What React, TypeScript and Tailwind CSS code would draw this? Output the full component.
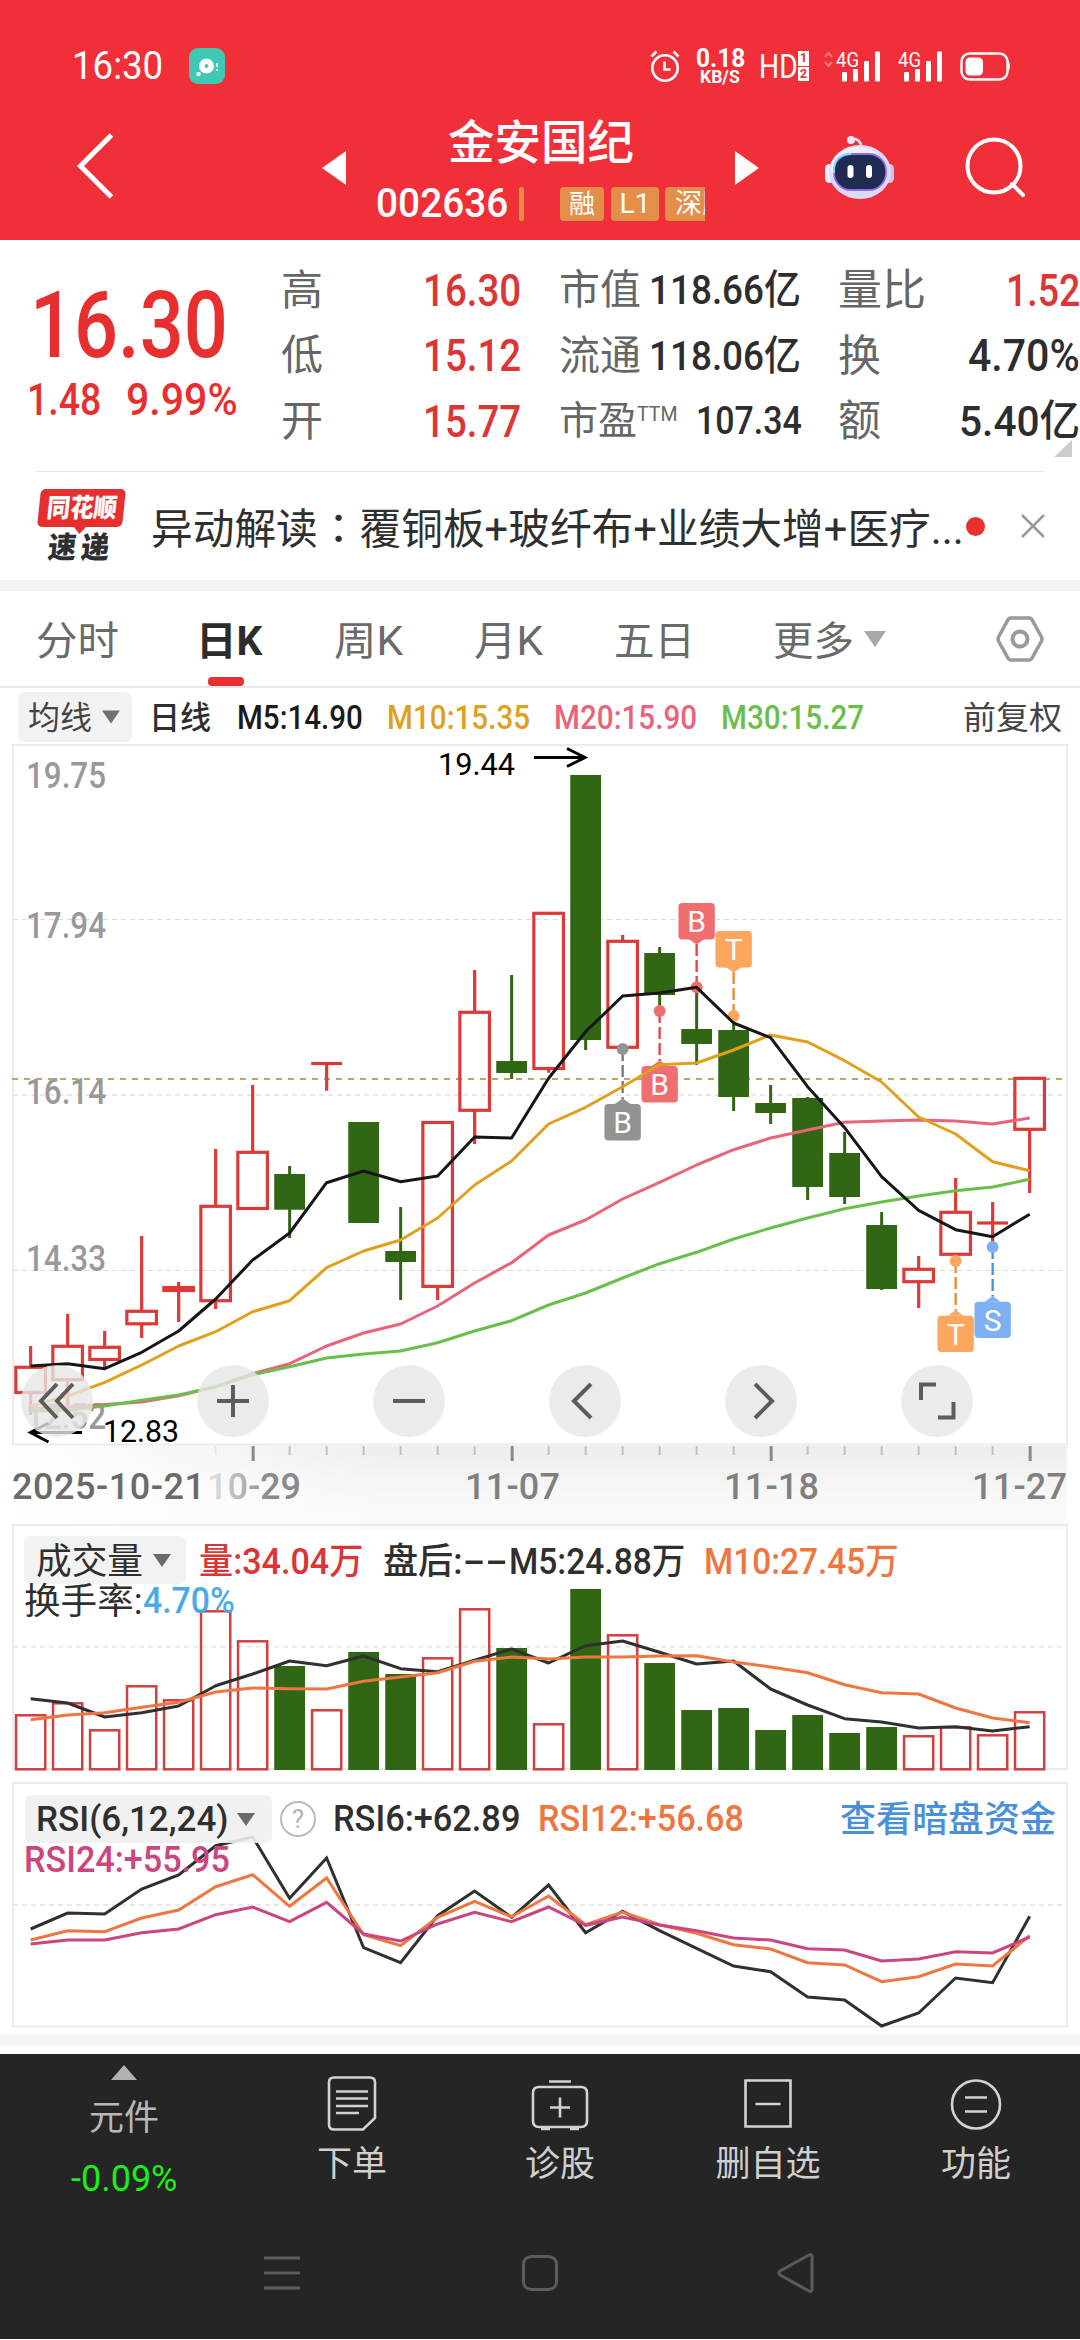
import { useLayoutEffect, useRef, useState } from "react";
import type { ReactNode } from "react";

/** Text condensed or stretched to the width of its box. */
function Fit({ className = "", children }: { className?: string; children: ReactNode }) {
  const box = useRef<HTMLSpanElement>(null);
  const ink = useRef<HTMLSpanElement>(null);
  const [scale, setScale] = useState(1);
  useLayoutEffect(() => {
    const measure = () => {
      if (box.current && ink.current && ink.current.offsetWidth) {
        setScale(box.current.clientWidth / ink.current.offsetWidth);
      }
    };
    measure();
    document.fonts?.ready.then(measure);
  }, [children]);
  return (
    <span ref={box} className={"inline-flex shrink-0 whitespace-nowrap leading-none " + className}>
      <span ref={ink} className="inline-block origin-left shrink-0 leading-none" style={{ transform: `scaleX(${scale})` }}>
        {children}
      </span>
    </span>
  );
}

const START = 30.65;
const STEP = 37;
const cx = (i: number) => START + i * STEP;
const path = (ys: number[]) => ys.map((y, i) => `${cx(i).toFixed(1)},${y}`).join(" ");

const RED = "#dc3a38";
const GREEN = "#306614";

// [up?, high, bodyTop, bodyBottom, low]
const candles: [boolean, number, number, number, number][] = [
  [true, 1347, 1368.3, 1393.5, 1416],
  [true, 1315, 1347.3, 1380.7, 1407],
  [true, 1332, 1348.3, 1360.5, 1368],
  [true, 1237, 1312.3, 1324.8, 1339],
  [true, 1283, 1288.5, 1291.5, 1323],
  [true, 1150, 1207.3, 1301.7, 1310],
  [true, 1086, 1153.3, 1209.5, 1209.5],
  [false, 1167, 1175, 1210.7, 1239],
  [true, 1064.5, 1064.5, 1064.5, 1091.7],
  [false, 1123, 1123, 1224, 1224],
  [false, 1208, 1252, 1263, 1301],
  [true, 1123.5, 1123.5, 1287.4, 1301],
  [true, 971, 1013.3, 1111.3, 1145],
  [false, 976, 1062, 1074, 1080],
  [true, 914.3, 914.3, 1069.5, 1073.7],
  [false, 776, 776, 1041, 1051],
  [true, 936, 942.3, 1048.3, 1048.3],
  [false, 948, 954, 996, 1011],
  [false, 989, 1030, 1045, 1066],
  [false, 1016, 1031, 1098, 1112],
  [false, 1086, 1104, 1114, 1125],
  [false, 1098, 1099, 1188, 1201],
  [false, 1133, 1154, 1198, 1205],
  [false, 1213, 1226, 1290, 1291],
  [true, 1257, 1270.3, 1282.7, 1309],
  [true, 1179, 1213.3, 1255.3, 1262],
  [true, 1203, 1224, 1224, 1247.7],
  [true, 1079.3, 1079.3, 1130.3, 1194],
];

const ma5 = [1367, 1364.7, 1369.7, 1353.3, 1332, 1300, 1261, 1234, 1183.7, 1172, 1182.7, 1177, 1138, 1139, 1079.3, 1032.7, 997, 994, 988.3, 1024, 1038.7, 1087.7, 1128.7, 1177.7, 1211.3, 1230.7, 1237.7, 1215.3];
const ma10 = [1407, 1397, 1383.3, 1366, 1347, 1332.7, 1312.7, 1301.7, 1268.7, 1252, 1241, 1219, 1186, 1162, 1125, 1108.3, 1087.7, 1065.7, 1064, 1051, 1036, 1043, 1061.7, 1083, 1118, 1135, 1162.7, 1171.7];
const ma20 = [1410, 1408, 1405.5, 1403, 1396.7, 1387.7, 1374.7, 1364.7, 1347, 1334, 1325, 1307, 1284, 1263.7, 1236, 1221, 1200, 1183.3, 1166, 1150.7, 1139, 1131, 1123.3, 1122, 1121, 1122, 1125, 1119];
const ma30 = [1412, 1411, 1407, 1401.3, 1396, 1387.7, 1375.7, 1367.7, 1359, 1355, 1352, 1343.7, 1332, 1321.7, 1306, 1294, 1279, 1264.7, 1253.3, 1240, 1229, 1219, 1209.7, 1203, 1197, 1191.7, 1188, 1180.3];

const volumes = [1716.3, 1704.3, 1731.3, 1687.3, 1701.3, 1612.3, 1642.3, 1667, 1711.3, 1653, 1675, 1659.3, 1610.3, 1649, 1725.3, 1590, 1636.3, 1664, 1711, 1709, 1731, 1716, 1734, 1728, 1737.3, 1728.3, 1736.3, 1713.3];
const vma5 = [1699.7, 1704, 1718, 1713.7, 1707, 1686.7, 1675, 1662, 1666.7, 1657, 1669.7, 1672.7, 1661.3, 1650, 1664, 1646.7, 1642, 1653.3, 1665, 1662, 1690, 1706, 1719.7, 1723, 1729, 1727.7, 1732, 1727.7];
const vma10 = [1720.7, 1716, 1713.7, 1708.3, 1703.3, 1693, 1689, 1689.7, 1690, 1682.3, 1678, 1673.7, 1662.3, 1658, 1660, 1658, 1658, 1657, 1656.7, 1663, 1668, 1673.7, 1685.7, 1693.7, 1695, 1709, 1719, 1723.7];

const rsi6 = [1930, 1914, 1915, 1890, 1876, 1846.7, 1838, 1899.3, 1859, 1948.7, 1963.7, 1916.7, 1892, 1918.3, 1886, 1933.7, 1912.3, 1931.7, 1949.3, 1967, 1972.7, 1998, 2001, 2027, 2014, 1979, 1983.7, 1917.3];
const rsi12 = [1941, 1931.7, 1932.7, 1919, 1911, 1887.7, 1875.7, 1907.3, 1879, 1935.7, 1946.7, 1918.3, 1902.3, 1917.7, 1897, 1925.7, 1913, 1925.7, 1934.3, 1945.7, 1950, 1963.7, 1966, 1982.7, 1977.7, 1965, 1967, 1936.7];
const rsi24 = [1945, 1941, 1941, 1933.7, 1930, 1915.7, 1908, 1922.7, 1903.3, 1935, 1942, 1925, 1913.3, 1922.7, 1908, 1926.3, 1918, 1926, 1931.7, 1939, 1941, 1949.7, 1951, 1962, 1960, 1952.7, 1954, 1938];

const markers: { i: number; letter: string; top: number; dot: number; fill: string; line: string }[] = [
  { i: 18, letter: "B", top: 904, dot: 988.3, fill: "#f06e70", line: "#e0484a" },
  { i: 19, letter: "T", top: 932, dot: 1017, fill: "#fda65e", line: "#f08a36" },
  { i: 16, letter: "B", top: 1105, dot: 1050, fill: "#939393", line: "#7a7a7a" },
  { i: 17, letter: "B", top: 1067, dot: 1012, fill: "#f06e70", line: "#e0484a" },
  { i: 25, letter: "T", top: 1316.7, dot: 1262, fill: "#fda65e", line: "#f08a36" },
  { i: 26, letter: "S", top: 1302.7, dot: 1248, fill: "#7db1f2", line: "#4a92e6" },
];

function Marker({ i, letter, top, dot, fill, line }: (typeof markers)[number]) {
  const x = cx(i);
  const above = top < dot;
  const from = above ? top + 41 : dot;
  const to = above ? dot : top - 5;
  return (
    <g>
      <line x1={x} x2={x} y1={from} y2={to} stroke={line} strokeWidth="2.4" strokeDasharray="12 4" />
      <circle cx={x} cy={dot} r="6" fill={fill} />
      <path d={above ? `M${x - 8} ${top + 36}h16l-8 5.5z` : `M${x - 8} ${top}h16l-8 -5.5z`} fill={fill} />
      <rect x={x - 18.2} y={top} width="36.4" height="36.4" rx="4" fill={fill} />
      <text x={x} y={top + 29} textAnchor="middle" fontSize="30" fill="#fff">{letter}</text>
    </g>
  );
}

function Candle({ i, up, high, top, bottom, low }: { i: number; up: boolean; high: number; top: number; bottom: number; low: number }) {
  const x = cx(i);
  if (up) {
    return (
      <g stroke={RED} strokeWidth="3.2" fill="none">
        {high < top && <line x1={x} x2={x} y1={high} y2={top} />}
        {low > bottom && <line x1={x} x2={x} y1={bottom} y2={low} />}
        {bottom - top > 1 ? (
          <rect x={x - 14.8} y={top} width="29.6" height={bottom - top} />
        ) : (
          <line x1={x - 15.5} x2={x + 15.5} y1={top} y2={top} />
        )}
      </g>
    );
  }
  return (
    <g fill={GREEN}>
      <rect x={x - 1.5} y={high} width="3" height={low - high} />
      <rect x={x - 15.4} y={top} width="30.8" height={bottom - top} />
    </g>
  );
}

function Down({ className = "" }: { className?: string }) {
  return (
    <svg viewBox="0 0 18 13" className={"shrink-0 " + className}>
      <path d="M0 0h18l-9 13z" fill="currentColor" />
    </svg>
  );
}

function Signal({ arrows }: { arrows?: boolean }) {
  return (
    <svg width="58" height="34" viewBox="-12 0 58 34" fill="#fff" className="shrink-0 overflow-visible">
      {arrows && <path d="M-11 8l3.500-4 3.500 4M-11 13l3.500 4 3.500-4" fill="none" stroke="#ff7d80" strokeWidth="2" />}
      <text x="0" y="17.500" fontSize="21" textLength="23" lengthAdjust="spacingAndGlyphs">4G</text>
      <rect x="6" y="23" width="5" height="9.500" rx="1" />
      <rect x="17" y="20" width="5" height="12.500" rx="1" />
      <rect x="28" y="12" width="5" height="20.500" rx="1" />
      <rect x="39" y="2.500" width="5" height="30" rx="1" />
    </svg>
  );
}

function Header() {
  return (
    <header className="flex h-60 shrink-0 flex-col bg-[#f12f38] text-white">
      <div className="mt-9 flex h-[60px] items-center">
        <Fit className="ml-[72px] w-[91px] text-[39px]">16:30</Fit>
        <svg width="36" height="36" viewBox="0 0 36 36" className="ml-[26px]">
          <rect width="36" height="36" rx="9" fill="#3fc8b4" />
          <circle cx="17.500" cy="18" r="7.500" fill="#fff" />
          <circle cx="17.500" cy="18" r="2" fill="#3fc8b4" />
          <circle cx="9.500" cy="26" r="2.200" fill="#fff" />
          <path d="M28 15v4M28 21v2" stroke="#fff" strokeWidth="1.500" />
        </svg>
        <svg width="30" height="32" viewBox="0 0 30 32" fill="none" stroke="#fff" strokeWidth="2.600" className="ml-[425px]">
          <circle cx="15" cy="18" r="12.700" />
          <path d="M14.500 11.500v8h6M1.500 6.500l5-5M28.500 6.500l-5-5" />
        </svg>
        <div className="ml-[15px] flex w-[50px] flex-col items-center">
          <Fit className="w-[49px] text-[25px] font-bold">0.18</Fit>
          <Fit className="-mt-[3px] w-10 text-[18px] font-bold">KB/S</Fit>
        </div>
        <Fit className="ml-[14px] w-[39px] text-[34px]">HD</Fit>
        <div className="flex w-[11px] flex-col gap-[1px] text-center text-[13px] leading-[14px] font-bold text-[#f12f38]">
          <span className="h-[15px] bg-white">1</span>
          <span className="h-[14px] bg-white">2</span>
        </div>
        <div className="ml-[15px] flex gap-1">
          <Signal arrows />
          <Signal />
        </div>
        <svg width="52" height="30" viewBox="0 0 52 30" className="ml-[16px]">
          <rect x="1.500" y="2.500" width="46" height="26" rx="8" fill="none" stroke="#fff" strokeWidth="2.400" />
          <rect x="5.500" y="6.500" width="17.500" height="18" rx="4.500" fill="#fff" />
          <path d="M48 9c2.500 3 2.500 9 0 12z" fill="#fff" />
        </svg>
      </div>
      <div className="flex h-[144px] items-center">
        <svg width="38" height="68" viewBox="0 0 38 68" fill="none" stroke="#fff" strokeWidth="5" className="-mt-1 ml-[76px]">
          <path d="M35.500 3L4.500 34l31 31" />
        </svg>
        <svg width="24" height="34" viewBox="0 0 24 34" className="ml-[208px]">
          <path d="M24 0v34L0 17z" fill="#fff" />
        </svg>
        <div className="ml-[30px] flex h-full w-[329px] flex-col">
          <div className="mt-[23px] flex h-[49px] justify-center">
            <Fit className="w-[186px] text-[47px] font-medium">金安国纪</Fit>
          </div>
          <div className="mt-[19px] flex h-[34px] items-center overflow-hidden">
            <Fit className="w-[132px] text-[40px] font-medium">002636</Fit>
            <span className="ml-[11px] h-[34px] w-[5px] shrink-0 rounded-sm bg-[#e38f4a]" />
            <span className="ml-9 h-[34px] w-11 shrink-0 rounded-sm bg-[#e38f4a] text-center text-[26px] leading-[34px]">融</span>
            <span className="ml-[7px] h-[34px] w-[48px] shrink-0 rounded-sm bg-[#e38f4a] text-center text-[28px] leading-[34px]">L1</span>
            <span className="ml-[6px] flex h-[34px] w-[50px] shrink-0 items-center rounded-sm bg-[#e38f4a] pl-[10px] text-[27px] leading-[34px] whitespace-nowrap">深股</span>
          </div>
        </div>
        <svg width="24" height="34" viewBox="0 0 24 34" className="ml-[30px]">
          <path d="M0 0v34l24-17z" fill="#fff" />
        </svg>
        <svg width="70" height="66" viewBox="0 0 70 66" className="ml-[66px]">
          <circle cx="26" cy="5" r="4" fill="#e9e6fa" />
          <path d="M26 4c7-1 10 3 10 8" fill="none" stroke="#e9e6fa" strokeWidth="2.500" />
          <rect x="0" y="29" width="9" height="19" rx="4.500" fill="#f0eefc" />
          <rect x="60" y="29" width="9" height="19" rx="4.500" fill="#c9c4f2" />
          <ellipse cx="35" cy="37" rx="31" ry="27" fill="#dedafa" />
          <ellipse cx="33" cy="34" rx="27" ry="22" fill="#f1effd" />
          <rect x="9" y="19" width="52" height="36" rx="17" fill="#1f2b50" stroke="#8f6cf0" strokeWidth="1.800" />
          <path d="M26 19c-11 0-17 6-17 16v3" fill="none" stroke="#7fe0f0" strokeWidth="1.800" />
          <rect x="22.500" y="30" width="6" height="13" rx="3" fill="#fff" />
          <rect x="41" y="30" width="6" height="13" rx="3" fill="#fff" />
        </svg>
        <svg width="62" height="62" viewBox="0 0 62 62" fill="none" stroke="#fff" strokeWidth="4" className="-mt-[2px] ml-[70px]">
          <circle cx="29" cy="30" r="26.500" />
          <path d="M47 48l11 11" strokeLinecap="round" />
        </svg>
      </div>
    </header>
  );
}

function Quote() {
  return (
    <section className="flex h-[232px] shrink-0 flex-col">
      <div className="flex h-[231px]">
        <div className="w-[281px] text-[#e72f30]">
          <Fit className="mt-[40px] ml-[30px] w-[198px] text-[92px] font-medium">16.30</Fit>
          <div className="mt-[6px] flex">
            <Fit className="ml-[27px] w-[74px] text-[44px] font-medium">1.48</Fit>
            <Fit className="ml-[25px] w-[112px] text-[44px] font-medium">9.99%</Fit>
          </div>
        </div>
        <div className="mt-[18px] w-[240px]">
          {[["高", "16.30"], ["低", "15.12"], ["开", "15.77"]].map(([k, v]) => (
            <div key={k} className="flex h-[65.5px] items-center justify-between text-[#666]">
              <Fit className="w-[42px] text-[42px]">{k}</Fit>
              <Fit className="w-[98px] text-[44px] font-medium text-[#dd3535]">{v}</Fit>
            </div>
          ))}
        </div>
        <div className="mt-[18px] ml-[38px] w-[242px] text-[#666]">
          <div className="flex h-[65.5px] items-center justify-between">
            <Fit className="w-[82px] text-[41px]">市值</Fit>
            <Fit className="w-[152px] text-[41px] font-medium text-[#2d2d2d]">118.66亿</Fit>
          </div>
          <div className="flex h-[65.5px] items-center justify-between">
            <Fit className="w-[82px] text-[41px]">流通</Fit>
            <Fit className="w-[152px] text-[41px] font-medium text-[#2d2d2d]">118.06亿</Fit>
          </div>
          <div className="flex h-[65.5px] items-center">
            <Fit className="w-[78px] text-[39px]">市盈</Fit>
            <Fit className="mb-[16px] w-[40px] text-[20px]">TTM</Fit>
            <Fit className="ml-[19px] w-[106px] text-[39px] font-medium text-[#2d2d2d]">107.34</Fit>
          </div>
        </div>
        <div className="relative mt-[18px] ml-[37px] w-[242px] text-[#666]">
          <div className="flex h-[65.5px] items-center justify-between">
            <Fit className="w-[88px] text-[43px]">量比</Fit>
            <Fit className="w-[74px] text-[44px] font-medium text-[#dd3535]">1.52</Fit>
          </div>
          <div className="flex h-[65.5px] items-center justify-between">
            <Fit className="w-[43px] text-[43px]">换</Fit>
            <Fit className="w-[112px] text-[44px] font-medium text-[#2d2d2d]">4.70%</Fit>
          </div>
          <div className="flex h-[65.5px] items-center justify-between">
            <Fit className="w-[43px] text-[43px]">额</Fit>
            <Fit className="w-[121px] text-[43px] font-medium text-[#2d2d2d]">5.40亿</Fit>
          </div>
          <svg width="18" height="17" viewBox="0 0 18 17" className="absolute right-[8px] bottom-[14px]">
            <path d="M18 0v17H0z" fill="#ccc" />
          </svg>
        </div>
      </div>
      <div className="mx-9 h-px bg-[#e6e6e6]" />
    </section>
  );
}

function News() {
  return (
    <section className="flex h-[108px] shrink-0 items-center text-[#2f2f2f]">
      <div className="ml-[37px] flex h-[74px] w-[88px] flex-col items-center">
        <div className="relative flex h-[38px] w-[85px] -skew-x-6 items-center justify-center rounded-[5px] bg-[#e63030]">
          <Fit className="w-[70px] text-[26px] font-black text-white">同花顺</Fit>
          <svg width="14" height="8" viewBox="0 0 14 8" className="absolute top-[37px] left-[36px]">
            <path d="M0 0h14L7 8z" fill="#e63030" />
          </svg>
        </div>
        <div className="mt-[6px] flex -skew-x-6">
          <Fit className="w-[66px] text-[30px] font-black tracking-[5px]">速递</Fit>
        </div>
      </div>
      <Fit className="mt-[3px] ml-[26px] w-[813px] text-[42px]">
        异动解读<span className="font-['Noto_Sans_CJK_TC',sans-serif]" lang="zh-TW">：</span>覆铜板+玻纤布+业绩大增+医疗...
      </Fit>
      <span className="ml-[2px] size-[19px] rounded-full bg-[#e93030]" />
      <svg width="26" height="26" viewBox="0 0 26 26" fill="none" stroke="#999" strokeWidth="2.500" className="ml-[35px]">
        <path d="M2 2l22 22M24 2L2 24" />
      </svg>
    </section>
  );
}

function Tabs() {
  return (
    <nav className="flex h-[97px] shrink-0 items-center border-b-2 border-[#e8e8e8] text-[40px] text-[#6a6a6a]">
      <Fit className="mt-[6px] ml-[36px] w-[83px]">分时</Fit>
      <div className="relative ml-[77px] flex h-full items-center">
        <Fit className="mt-[6px] w-[66px] font-bold text-[#2c2c2c]">日K</Fit>
        <span className="absolute bottom-0 left-[12px] h-[9px] w-9 rounded-[4px] bg-[#e93030]" />
      </div>
      <Fit className="mt-[6px] ml-[72px] w-[69px]">周K</Fit>
      <Fit className="mt-[6px] ml-[71px] w-[69px]">月K</Fit>
      <Fit className="mt-[6px] ml-[71px] w-[81px]">五日</Fit>
      <Fit className="mt-[6px] ml-[78px] w-[81px]">更多</Fit>
      <Down className="ml-[10px] h-[18px] w-[22px] text-[#a8a8a8]" />
      <svg width="48" height="46" viewBox="0 0 48 46" fill="none" stroke="#999" className="ml-[110px]">
        <path d="M14.500 2h19q1.500 0 2.300 1.300L45.500 21q1 2 0 4L35.800 42.700Q35 44 33.500 44h-19q-1.500 0-2.300-1.300L2.500 25q-1-2 0-4L12.200 3.300Q13 2 14.500 2z" strokeWidth="3.500" />
        <circle cx="24" cy="23" r="7.500" strokeWidth="4" />
      </svg>
    </nav>
  );
}

function Averages() {
  return (
    <div className="flex h-[56px] shrink-0 items-center pt-[2px] text-[33px] font-medium">
      <div className="ml-[18px] flex h-[50px] w-[114px] items-center rounded-md bg-[#f2f2f2] text-[#444]">
        <Fit className="mt-[2px] ml-[10px] w-[64px] text-[32px] font-normal">均线</Fit>
        <Down className="ml-[10px] h-[14px] w-[18px] text-[#707070]" />
      </div>
      <Fit className="mt-[2px] ml-[17px] w-[62px] text-[32px] text-[#2f2f2f]">日线</Fit>
      <Fit className="ml-[26px] w-[126px] text-[34px] text-[#1a1a1a]">M5:14.90</Fit>
      <Fit className="ml-[24px] w-[143px] text-[34px] text-[#e0a01c]">M10:15.35</Fit>
      <Fit className="ml-[24px] w-[143px] text-[34px] text-[#e9647a]">M20:15.90</Fit>
      <Fit className="ml-[24px] w-[143px] text-[34px] text-[#6abf4b]">M30:15.27</Fit>
      <Fit className="mt-[2px] ml-[99px] w-[99px] text-[32px] font-normal text-[#444]">前复权</Fit>
    </div>
  );
}

const controls = [
  "M26 -17L10 0l16 17M10 -17L-6 0l16 17",
  "M-16 0h32M0 -16v32",
  "M-16 0h32",
  "M6 -17L-11 0L6 17",
  "M-6 -17L11 0L-6 17",
  "M-16 -1V-16.500H-1M1 16.500H16.500V1",
];

function KChart() {
  return (
    <section className="relative h-[780px] shrink-0">
      <svg width="1080" height="786" viewBox="0 745 1080 786" className="absolute top-0 left-0">
        <defs>
          <linearGradient id="axisFade" x1="0" y1="0" x2="0" y2="1">
            <stop offset="0" stopColor="#ededed" />
            <stop offset="0.600" stopColor="#f8f8f8" />
            <stop offset="1" stopColor="#fafafa" />
          </linearGradient>
          <linearGradient id="axisLeft" x1="0" y1="0" x2="1" y2="0">
            <stop offset="0" stopColor="#fff" />
            <stop offset="1" stopColor="#fff" stopOpacity="0" />
          </linearGradient>
          <linearGradient id="labelFade" gradientUnits="userSpaceOnUse" x1="208" y1="0" x2="270" y2="0">
            <stop offset="0" stopColor="#e4e4e4" />
            <stop offset="1" stopColor="#8a8a8a" />
          </linearGradient>
        </defs>
        <rect x="0" y="1447" width="1067" height="84" fill="url(#axisFade)" />
        <rect x="0" y="1447" width="400" height="84" fill="url(#axisLeft)" />
        <rect x="13" y="746" width="1054" height="699.500" fill="none" stroke="#ebebeb" strokeWidth="2" />
        <g stroke="#dadada" strokeWidth="1.200" strokeDasharray="5 4">
          <line x1="13" x2="1066" y1="920.500" y2="920.500" />
          <line x1="13" x2="1066" y1="1096" y2="1096" stroke="#e8e8e8" strokeWidth="2" />
          <line x1="13" x2="1066" y1="1271.500" y2="1271.500" />
        </g>
        <g fontSize="36" fill="#999" fontWeight="500">
          {[["19.75", 788.5], ["17.94", 938.5], ["16.14", 1104.5], ["14.33", 1271.5], ["12.52", 1430]].map(([t, y]) => (
            <text key={t} x="26" y={y} textLength="80" lengthAdjust="spacingAndGlyphs">{t}</text>
          ))}
        </g>
        <line x1="12" x2="1066" y1="1080" y2="1080" stroke="#b9a46c" strokeWidth="2" strokeDasharray="6 6" />
        {candles.map(([up, high, top, bottom, low], i) => (
          <Candle key={i} i={i} up={up} high={high} top={top} bottom={bottom} low={low} />
        ))}
        {markers.map((m) => (
          <Marker key={m.i} {...m} />
        ))}
        <g fill="none" strokeWidth="3" strokeLinejoin="round">
          <polyline points={path(ma20)} stroke="#e9647a" />
          <polyline points={path(ma30)} stroke="#6abf4b" />
          <polyline points={path(ma10)} stroke="#e0a01c" />
          <polyline points={path(ma5)} stroke="#161616" />
        </g>
        <g fill="none" stroke="#000" strokeWidth="3">
          <path d="M534 758.500H584M567 749.500l18 9-18 9" />
          <path d="M82 1433.500H32M48.500 1424l-18 9.500 18 9.500" />
        </g>
        <text x="438" y="776" fontSize="30.500" textLength="77" lengthAdjust="spacingAndGlyphs" fill="#000">19.44</text>
        <text x="103" y="1443" fontSize="30.500" textLength="76" lengthAdjust="spacingAndGlyphs" fill="#000">12.83</text>
        {candles.map((_, i) =>
          i < 5 ? null : (i + 1) % 7 === 0 || i === 27 ? (
            <line key={i} x1={cx(i) + 0.5} x2={cx(i) + 0.5} y1="1447" y2="1462" stroke="#8a8a8a" strokeWidth="3" />
          ) : (
            <line key={i} x1={cx(i)} x2={cx(i)} y1="1447" y2="1456" stroke={i === 5 ? "#e6e6e6" : "#c0c0c0"} strokeWidth="2" />
          ),
        )}
        <g fontSize="36" fill="#808080" fontWeight="500">
          <text x="12" y="1500" textLength="193" lengthAdjust="spacing" fill="#6a6a6a">2025-10-21</text>
          <text x="207" y="1500" textLength="94" lengthAdjust="spacing" fill="url(#labelFade)">10-29</text>
          <text x="465" y="1500" textLength="95" lengthAdjust="spacing">11-07</text>
          <text x="724" y="1500" textLength="95" lengthAdjust="spacing">11-18</text>
          <text x="972" y="1500" textLength="95" lengthAdjust="spacing">11-27</text>
        </g>
      </svg>
      <div className="absolute top-[621px] left-[21px] flex gap-[104px]">
        {controls.map((d) => (
          <span key={d} className="flex size-[72px] items-center justify-center rounded-full bg-[#e6e6e6]/80">
            <svg width="72" height="72" viewBox="-36 -36 72 72" fill="none" stroke="#5c5c5c" strokeWidth="4">
              <path d={d} transform={d.startsWith("M26") ? "translate(-10 0)" : undefined} />
            </svg>
          </span>
        ))}
      </div>
    </section>
  );
}

function Volume() {
  return (
    <section className="relative h-[252px] shrink-0">
      <svg width="1080" height="252" viewBox="0 1525 1080 252" className="absolute top-0 left-0">
        <rect x="13" y="1526" width="1054" height="244" fill="none" stroke="#ebebeb" strokeWidth="2" />
        <line x1="13" x2="1066" y1="1647.700" y2="1647.700" stroke="#e8e8e8" strokeWidth="2" strokeDasharray="5 4" />
        {volumes.map((y, i) =>
          candles[i][0] ? (
            <rect key={i} x={cx(i) - 14.6} y={y} width="29.200" height={1770.3 - y} fill="none" stroke="#d04040" strokeWidth="2.500" />
          ) : (
            <rect key={i} x={cx(i) - 15.4} y={y} width="30.800" height={1771 - y} fill={GREEN} />
          ),
        )}
        <g fill="none" strokeWidth="3" strokeLinejoin="round">
          <polyline points={path(vma5)} stroke="#303030" />
          <polyline points={path(vma10)} stroke="#ee7640" />
        </g>
      </svg>
      <div className="relative flex h-[60px] items-center pt-[12px] text-[36px] font-medium text-[#2f2f2f]">
        <div className="ml-[24px] flex h-[48px] w-[162px] items-center rounded-md bg-[#f2f2f2]">
          <Fit className="mt-[4px] ml-[12px] w-[107px] text-[36px] font-normal">成交量</Fit>
          <Down className="ml-[10px] h-[13px] w-[18px] text-[#6a6a6a]" />
        </div>
        <Fit className="mt-[3px] ml-[13px] w-[164px] text-[#dd3535]">量:34.04万</Fit>
        <Fit className="mt-[3px] ml-[20px] w-[80px]">盘后:</Fit>
        <Fit className="mt-[3px] w-[44px]">--</Fit>
        <Fit className="mt-[3px] ml-[2px] w-[176px]">M5:24.88万</Fit>
        <Fit className="mt-[3px] ml-[19px] w-[195px] text-[#ee7640]">M10:27.45万</Fit>
      </div>
      <div className="relative flex h-[34px] items-center text-[36px] font-medium text-[#2f2f2f]">
        <Fit className="mt-[2px] ml-[24px] w-[119px] font-normal">换手率:</Fit>
        <Fit className="w-[92px] text-[#48abe8]">4.70%</Fit>
      </div>
    </section>
  );
}

function Rsi() {
  return (
    <section className="relative h-[258px] shrink-0">
      <svg width="1080" height="258" viewBox="0 1777 1080 258" className="absolute top-0 left-0">
        <rect x="13" y="1784" width="1054" height="243.500" fill="none" stroke="#ebebeb" strokeWidth="2" />
        <line x1="13" x2="1066" y1="1906" y2="1906" stroke="#e8e8e8" strokeWidth="2" strokeDasharray="5 4" />
        <polyline points={path(rsi6)} fill="none" stroke="#303030" strokeWidth="3" />
      </svg>
      <div className="relative flex h-[67px] items-center pt-[19px] text-[36px] font-medium text-[#2f2f2f]">
        <div className="ml-[25px] flex h-[48px] w-[247px] items-center rounded-md bg-[#f0f0f0]/90">
          <Fit className="ml-[11px] w-[193px] text-[35px]">RSI(6,12,24)</Fit>
          <Down className="ml-[8px] h-[13px] w-[18px] text-[#6a6a6a]" />
        </div>
        <span className="ml-[8px] flex size-[36px] items-center justify-center rounded-full border-[2.500px] border-[#bbb] text-[26px] leading-none font-normal text-[#b5b5b5]">?</span>
        <Fit className="ml-[17px] w-[187px]">RSI6:+62.89</Fit>
        <Fit className="ml-[18px] w-[206px] text-[#ee7640]">RSI12:+56.68</Fit>
        <Fit className="mt-[2px] ml-[96px] w-[216px] text-[#4a90d9]">查看暗盘资金</Fit>
      </div>
      <div className="relative flex h-[34px] items-center text-[36px] font-medium text-[#cb4580]">
        <Fit className="ml-[24px] w-[206px]">RSI24:+55.95</Fit>
      </div>
      <svg width="1080" height="258" viewBox="0 1777 1080 258" fill="none" strokeWidth="3" className="absolute top-0 left-0">
        <polyline points={path(rsi12)} stroke="#ee7640" />
        <polyline points={path(rsi24)} stroke="#cb4580" />
      </svg>
    </section>
  );
}

function NavItem({ label, icon, className }: { label: string; icon: ReactNode; className: string }) {
  return (
    <div className={"flex shrink-0 flex-col items-center " + className}>
      <svg width="60" height="60" viewBox="-30 -30 60 60" fill="none" stroke="#d2d2d2" strokeWidth="2.600">
        {icon}
      </svg>
      <span className="mt-[11px] text-[35px] leading-[40px] whitespace-nowrap text-[#d0d0d0]">{label}</span>
    </div>
  );
}

function BottomBar() {
  return (
    <footer className="flex h-[285px] shrink-0 flex-col bg-[#252525]">
      <div className="flex h-[160px]">
        <div className="ml-[64px] flex w-[120px] flex-col items-center">
          <svg width="26" height="15" viewBox="0 0 26 15" className="mt-[11px]">
            <path d="M13 0l13 15H0z" fill="#b2b2b2" />
          </svg>
          <span className="mt-[19px] text-[35px] leading-[40px] text-[#b8b8b8]">元件</span>
          <Fit className="mt-[21px] w-[106px] text-[37px] text-[#18f018]">-0.09%</Fit>
        </div>
        <NavItem
          className="mt-[20px] ml-[108px] w-[120px]"
          label="下单"
          icon={<path d="M-18 -26.500H18q5 0 5 5V14L11 25.500H-18q-5 0-5-5V-21.500q0-5 5-5zM-16 -12.500H16M-16 -5.500H16M-16 2H16M-16 9H7" />}
        />
        <NavItem
          className="mt-[20px] ml-[88px] w-[120px]"
          label="诊股"
          icon={<path d="M-21 -17H21q6 0 6 6V17q0 6-6 6H-21q-6 0-6-6V-11q0-6 6-6zM-11 -22.500H11M-10 3.500H10M0 -6.500V13.500M-19 25h9M10 25h9" />}
        />
        <NavItem
          className="mt-[20px] ml-[88px] w-[120px]"
          label="删自选"
          icon={<path d="M-22.500 -23.500H22.500V22.500H-22.500zM-12.500 0H12.500" />}
        />
        <NavItem
          className="mt-[20px] ml-[88px] w-[120px]"
          label="功能"
          icon={<path d="M24 0.500a24 24 0 1 1-48 0a24 24 0 1 1 48 0zM-11 -6.500H11M-11 7.500H11" />}
        />
      </div>
      <div className="mt-[34px] flex h-[50px] items-center">
        <svg width="36" height="34" viewBox="0 0 36 34" stroke="#5c5c5c" strokeWidth="3" className="ml-[264px]">
          <path d="M0 2h36M0 17h36M0 32h36" />
        </svg>
        <span className="ml-[222px] size-[36px] rounded-[9px] border-[3px] border-[#5c5c5c]" />
        <svg width="37" height="40" viewBox="0 0 37 40" fill="none" stroke="#5c5c5c" strokeWidth="3" strokeLinejoin="round" className="ml-[219px]">
          <path d="M35 2.500v35q-1.500 1.500-3 .5L3 22q-2-2 0-4L32 2q1.500-1 3 .5z" />
        </svg>
      </div>
    </footer>
  );
}

export default function App() {
  return (
    <div className="flex h-[2340px] w-[1080px] flex-col overflow-hidden bg-white font-[Roboto,'Noto_Sans_CJK_SC',sans-serif]">
      <Header />
      <Quote />
      <News />
      <div className="h-[11px] shrink-0 bg-[#f4f4f4]" />
      <Tabs />
      <Averages />
      <KChart />
      <Volume />
      <Rsi />
      <div className="h-[12px] shrink-0 bg-[#f4f4f4]" />
      <div className="h-[8px] shrink-0" />
      <BottomBar />
    </div>
  );
}
